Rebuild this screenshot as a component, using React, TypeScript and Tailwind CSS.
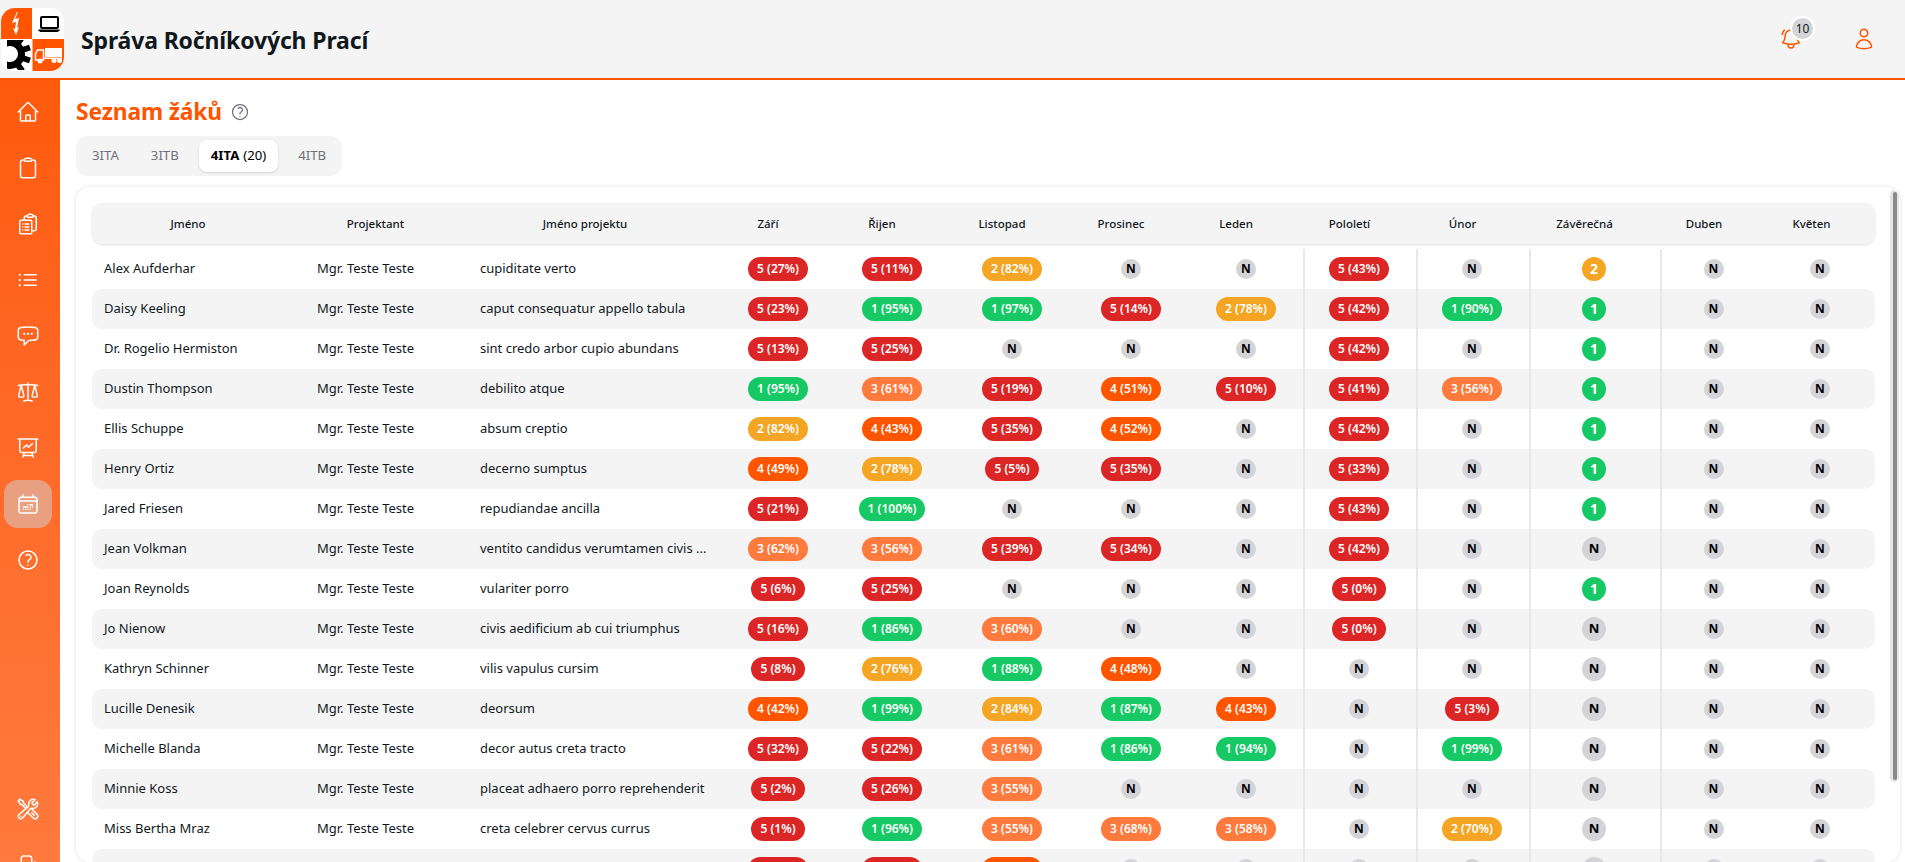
import {
  HiOutlineHome,
  HiOutlineClipboard,
  HiOutlineClipboardDocumentList,
  HiOutlineListBullet,
  HiOutlineChatBubbleLeftEllipsis,
  HiOutlineScale,
  HiOutlinePresentationChartLine,
  HiOutlineCalendarDateRange,
  HiOutlineQuestionMarkCircle,
  HiOutlineWrenchScrewdriver,
  HiOutlineArrowRightStartOnRectangle,
  HiOutlineBellAlert,
  HiOutlineUser,
} from 'react-icons/hi2';

const gradeColors: Record<string, string> = {
  '1': 'bg-[#17c964]',
  '2': 'bg-[#f5a524]',
  '3': 'bg-[#ff7a3d]',
  '4': 'bg-[#ff5500]',
  '5': 'bg-[#dc2626]',
};

const columns = [
  { label: 'Jméno', width: 'w-[212px]' },
  { label: 'Projektant', width: 'w-[163px]' },
  { label: 'Jméno projektu', width: 'w-[256px]' },
  { label: 'Září', width: 'w-[110px]' },
  { label: 'Řijen', width: 'w-[118px]' },
  { label: 'Listopad', width: 'w-[122px]' },
  { label: 'Prosinec', width: 'w-[116px]' },
  { label: 'Leden', width: 'w-[114px]' },
  { label: 'Pololetí', width: 'w-[113px]' },
  { label: 'Únor', width: 'w-[113px]' },
  { label: 'Závěrečná', width: 'w-[131px]' },
  { label: 'Duben', width: 'w-[108px]' },
  { label: 'Květen', width: 'w-[107px]' },
];

// měsíce: "známka procenta", prázdný řetězec = N
const students: { name: string; project: string; marks: string[]; final: string }[] = [
  { name: 'Alex Aufderhar', project: 'cupiditate verto', marks: ['5 27', '5 11', '2 82', '', '', '5 43', ''], final: '2' },
  { name: 'Daisy Keeling', project: 'caput consequatur appello tabula', marks: ['5 23', '1 95', '1 97', '5 14', '2 78', '5 42', '1 90'], final: '1' },
  { name: 'Dr. Rogelio Hermiston', project: 'sint credo arbor cupio abundans', marks: ['5 13', '5 25', '', '', '', '5 42', ''], final: '1' },
  { name: 'Dustin Thompson', project: 'debilito atque', marks: ['1 95', '3 61', '5 19', '4 51', '5 10', '5 41', '3 56'], final: '1' },
  { name: 'Ellis Schuppe', project: 'absum creptio', marks: ['2 82', '4 43', '5 35', '4 52', '', '5 42', ''], final: '1' },
  { name: 'Henry Ortiz', project: 'decerno sumptus', marks: ['4 49', '2 78', '5 5', '5 35', '', '5 33', ''], final: '1' },
  { name: 'Jared Friesen', project: 'repudiandae ancilla', marks: ['5 21', '1 100', '', '', '', '5 43', ''], final: '1' },
  { name: 'Jean Volkman', project: 'ventito candidus verumtamen civis ...', marks: ['3 62', '3 56', '5 39', '5 34', '', '5 42', ''], final: '' },
  { name: 'Joan Reynolds', project: 'vulariter porro', marks: ['5 6', '5 25', '', '', '', '5 0', ''], final: '1' },
  { name: 'Jo Nienow', project: 'civis aedificium ab cui triumphus', marks: ['5 16', '1 86', '3 60', '', '', '5 0', ''], final: '' },
  { name: 'Kathryn Schinner', project: 'vilis vapulus cursim', marks: ['5 8', '2 76', '1 88', '4 48', '', '', ''], final: '' },
  { name: 'Lucille Denesik', project: 'deorsum', marks: ['4 42', '1 99', '2 84', '1 87', '4 43', '', '5 3'], final: '' },
  { name: 'Michelle Blanda', project: 'decor autus creta tracto', marks: ['5 32', '5 22', '3 61', '1 86', '1 94', '', '1 99'], final: '' },
  { name: 'Minnie Koss', project: 'placeat adhaero porro reprehenderit', marks: ['5 2', '5 26', '3 55', '', '', '', ''], final: '' },
  { name: 'Miss Bertha Mraz', project: 'creta celebrer cervus currus', marks: ['5 1', '1 96', '3 55', '3 68', '3 58', '', '2 70'], final: '' },
  { name: '', project: '', marks: ['5 18', '5 30', '4 47', '', '', '', ''], final: '' },
];

const navItems = [
  HiOutlineHome,
  HiOutlineClipboard,
  HiOutlineClipboardDocumentList,
  HiOutlineListBullet,
  HiOutlineChatBubbleLeftEllipsis,
  HiOutlineScale,
  HiOutlinePresentationChartLine,
  HiOutlineCalendarDateRange,
  HiOutlineQuestionMarkCircle,
];

function Logo() {
  return (
    <svg width="64" height="64" viewBox="0 0 64 64" className="shrink-0">
      <defs>
        <clipPath id="logo-clip">
          <rect x="1" y="1" width="63" height="63" rx="14" />
        </clipPath>
        <clipPath id="gear-clip">
          <rect x="7" y="33" width="25" height="30" />
        </clipPath>
      </defs>
      <g clipPath="url(#logo-clip)">
        <rect width="64" height="64" fill="#fff" />
        <rect x="1" y="1" width="31" height="31" fill="#ff5500" />
        <rect x="32.5" y="32" width="32" height="32" fill="#ff5500" />
        {/* blesk */}
        <path d="M17 5l-5 11 4-1-1 7-2-1 3 7 3-8-2 1 2-10-4 1 3-7z" fill="#fff" />
        {/* notebook */}
        <rect x="41" y="10" width="17" height="11" rx="1" fill="none" stroke="#000" strokeWidth="2" />
        <path d="M38.500 23h21l-1.500 1.500h-18z" fill="#000" stroke="#000" strokeWidth="1" />
        {/* ozubené kolo */}
        <g clipPath="url(#gear-clip)">
          <circle cx="10" cy="47" r="11.500" fill="none" stroke="#000" strokeWidth="7" />
          {[0, 36, 72, 108, 144, 216, 252, 288, 324].map((a) => (
            <rect key={a} x="7" y="26" width="6" height="8" fill="#000" transform={`rotate(${a} 10 47)`} />
          ))}
        </g>
        {/* kamion */}
        <rect x="45" y="41" width="17" height="9" fill="#fff" />
        <path d="M43.500 43h-6l-2 4v6h8z" fill="none" stroke="#fff" strokeWidth="1.500" />
        <rect x="43" y="50.500" width="19" height="1.500" fill="#fff" />
        <circle cx="40" cy="54" r="2.500" fill="#fff" />
        <circle cx="54" cy="53.500" r="2.500" fill="#fff" />
        <circle cx="59.500" cy="53.500" r="2.500" fill="#fff" />
      </g>
    </svg>
  );
}

function NBadge({ large }: { large?: boolean }) {
  return (
    <span
      className={`flex items-center justify-center rounded-full bg-[#d4d4d8] font-bold text-black ${
        large ? 'size-6 text-[13px]' : 'size-5 text-xs'
      }`}>
      N
    </span>
  );
}

function Mark({ value }: { value: string }) {
  if (!value) return <NBadge />;
  const [grade, percent] = value.split(' ');
  return (
    <span
      className={`flex h-6 items-center rounded-full px-[9px] text-xs font-semibold whitespace-nowrap text-white ${gradeColors[grade]}`}>
      {grade} ({percent}%)
    </span>
  );
}

function FinalMark({ value }: { value: string }) {
  if (!value) return <NBadge large />;
  return (
    <span
      className={`flex size-6 items-center justify-center rounded-full text-sm font-bold text-white ${gradeColors[value]}`}>
      {value}
    </span>
  );
}

function Cell({ divider, children }: { divider?: boolean; children: React.ReactNode }) {
  return (
    <td className={`p-0 align-middle ${divider ? 'border-l-2 border-[#e8e8eb] pr-[3px]' : ''}`}>
      <div className="flex justify-center">{children}</div>
    </td>
  );
}

export default function App() {
  return (
    <div className="flex h-[862px] flex-col overflow-hidden bg-white font-['Noto_Sans',sans-serif] text-[#11181c]">
      <header className="flex h-20 shrink-0 items-center border-b-2 border-[#ff5500] bg-[#f4f4f5]">
        <Logo />
        <h1 className="mt-0.5 ml-[17px] text-[23px] font-bold tracking-[-0.15px] text-[#11181c]">Správa Ročníkových Prací</h1>
        <div className="ml-auto flex items-center pr-[29px]">
          <div className="relative mr-[49px] text-[#ff5500]">
            <HiOutlineBellAlert size={24} />
            <span className="absolute -top-[11px] left-[11px] flex size-[25px] items-center justify-center rounded-full border-2 border-white bg-[#d4d4d8] text-xs text-[#11181c]">
              10
            </span>
          </div>
          <HiOutlineUser size={24} className="text-[#ff5500]" />
        </div>
      </header>

      <div className="flex min-h-0 flex-1">
        <nav className="flex w-[60px] shrink-0 flex-col gap-2 overflow-hidden bg-linear-to-b from-[#ff5a0a] to-[#ff7a3c] pt-2 pl-1">
          {navItems.map((Icon, i) => (
            <div
              key={i}
              className={`flex size-12 shrink-0 items-center justify-center rounded-[14px] text-white ${
                i === 7 ? 'bg-[#d4d4d8]/50' : ''
              }`}>
              <Icon size={24} />
            </div>
          ))}
          <div className="mt-[193px] flex size-12 shrink-0 items-center justify-center text-white">
            <HiOutlineWrenchScrewdriver size={24} />
          </div>
          <div className="flex size-12 shrink-0 items-center justify-center text-white">
            <HiOutlineArrowRightStartOnRectangle size={24} />
          </div>
        </nav>

        <main className="flex min-w-0 flex-1 flex-col pt-[16px] pr-[5px] pl-4">
          <div className="flex items-center gap-2">
            <h2 className="text-[22.8px] leading-8 font-bold tracking-[-0.15px] text-[#ff5500]">Seznam žáků</h2>
            <HiOutlineQuestionMarkCircle size={20} className="text-[#71717a]" />
          </div>

          <div className="mt-2 flex w-fit gap-2 rounded-xl bg-[#f4f4f5] p-1 text-[13.2px] text-[#71717a]">
            <div className="flex h-8 items-center px-3">3ITA</div>
            <div className="flex h-8 items-center px-3">3ITB</div>
            <div className="flex h-8 items-center rounded-lg bg-white px-3 text-black shadow-sm">
              <span className="font-bold">4ITA</span>
              <span className="ml-1">(20)</span>
            </div>
            <div className="flex h-8 items-center px-3">4ITB</div>
          </div>

          <div className="relative mt-[11px] flex-1 overflow-hidden rounded-[14px] bg-white pt-4 pl-4 shadow-[0_0_4px_rgba(0,0,0,0.12)]">
            <table className="w-[1783px] table-fixed border-separate border-spacing-0 text-[13px]">
              <colgroup>
                {columns.map((c) => (
                  <col key={c.label} className={c.width} />
                ))}
              </colgroup>
              <thead>
                <tr className="h-[41px] rounded-[10px] shadow-sm">
                  {columns.map((c, i) => (
                    <th
                      key={c.label}
                      className={`bg-[#f4f4f5] pr-5 text-center text-[11.5px] font-medium ${i === 0 ? 'rounded-l-[10px]' : ''} ${
                        i === columns.length - 1 ? 'rounded-r-[10px]' : ''
                      }`}>
                      {c.label}
                    </th>
                  ))}
                </tr>
                <tr className="h-[5px]">
                  <td colSpan={13} className="p-0" />
                </tr>
              </thead>
              <tbody>
                {students.map((s, i) => {
                  const bg = i % 2 === 1 ? 'bg-[#f4f4f5]' : '';
                  return (
                    <tr key={i} className={`h-10 ${bg}`}>
                      <td className={`truncate pl-3 ${i % 2 === 1 ? 'rounded-l-[10px]' : ''}`}>{s.name}</td>
                      <td className="truncate pl-[13px]">{s.name && 'Mgr. Teste Teste'}</td>
                      <td className="truncate pl-[13px]">{s.project}</td>
                      {s.marks.map((m, j) => (
                        <Cell key={j} divider={j >= 5}>
                          <Mark value={m} />
                        </Cell>
                      ))}
                      <Cell divider>
                        <FinalMark value={s.final} />
                      </Cell>
                      <Cell divider>
                        <NBadge />
                      </Cell>
                      <td className={`p-0 pr-[3px] ${i % 2 === 1 ? 'rounded-r-[10px]' : ''}`}>
                        <div className="flex justify-center">
                          <NBadge />
                        </div>
                      </td>
                    </tr>
                  );
                })}
              </tbody>
            </table>

            {/* scrollbar */}
            <div className="absolute top-[3px] right-[1px] h-[592px] w-[9px] rounded-full bg-[#e4e4e7] p-[2px] px-[2.5px]">
              <div className="h-full w-full rounded-full bg-[#8a8a8a]" />
            </div>
          </div>
        </main>
      </div>
    </div>
  );
}
